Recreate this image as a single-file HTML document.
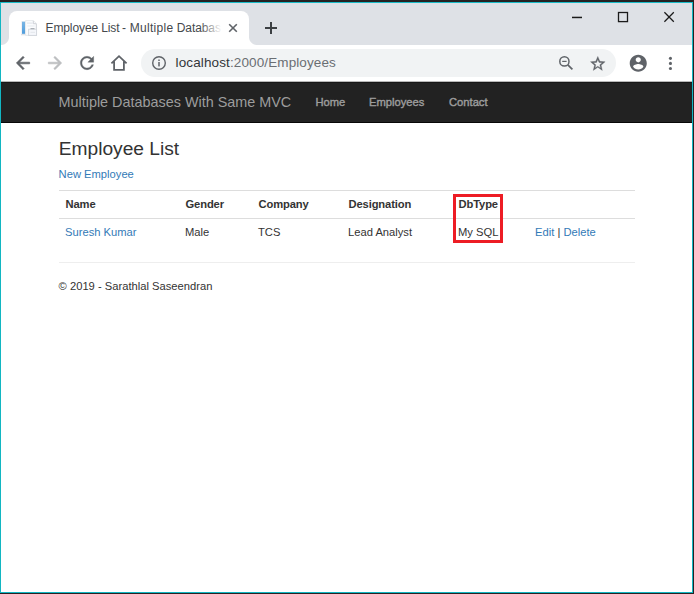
<!DOCTYPE html>
<html lang="en">
<head>
<meta charset="utf-8">
<title>Employee List - Multiple Databases With Same MVC</title>
<style>
*{box-sizing:border-box;margin:0;padding:0}
html,body{width:694px;height:594px;overflow:hidden;background:#fff}
body{position:relative;font-family:"Liberation Sans",sans-serif;color:#333}
.abs{position:absolute}
#frame-top{left:0;top:0;width:694px;height:2px;background:#252223}
#frame-teal-top{left:0;top:2px;width:693px;height:1px;background:#1bbcc8}
#frame-left{left:0;top:2px;width:1px;height:591px;background:#12b6c2}
#frame-right{left:692px;top:2px;width:1px;height:591px;background:#12b6c2}
#frame-right-dark{left:693px;top:0;width:1px;height:594px;background:#252223}
#frame-bottom{left:0;top:592px;width:693px;height:1px;background:#12b6c2}
#frame-bottom-dark{left:0;top:593px;width:694px;height:1px;background:#252223}
#tabstrip{left:1px;top:3px;width:691px;height:42px;background:#dee1e6}
#tab{left:9px;top:11px;width:240px;height:34px;background:#fff;border-radius:8px 8px 0 0}
#tab:before,#tab:after{content:"";position:absolute;bottom:0;width:8px;height:8px;background:radial-gradient(circle at 0 0,#dee1e6 7.5px,#fff 8.5px)}
#tab:before{left:-8px}
#tab:after{right:-8px;background:radial-gradient(circle at 100% 0,#dee1e6 7.5px,#fff 8.5px)}
#tabtitle{left:45px;top:20px;width:176px;height:18px;font-size:12px;line-height:16px;color:#44484c;white-space:nowrap;overflow:hidden;letter-spacing:-0.1px}
.w{position:absolute;top:0}
#tabfade{left:200px;top:18px;width:22px;height:20px;background:linear-gradient(to right,rgba(255,255,255,0),#fff)}
#toolbar{left:1px;top:45px;width:691px;height:37px;background:#fff;border-bottom:1px solid #b9b9b9}
#omnibox{left:141px;top:49px;width:475px;height:28px;border-radius:14px;background:#f1f3f4}
#url{left:175.6px;top:53.8px;font-size:13.5px;line-height:18px;color:#33363a;white-space:nowrap;letter-spacing:0.12px}
#url span{color:#6a6e73;letter-spacing:0.11px}
#navbar{left:1px;top:82px;width:691px;height:40.5px;background:#222;border-top:1px solid #171717;border-bottom:1px solid #080808}
.nav{color:#9d9d9d;white-space:nowrap}
#brand{left:58.5px;top:94px;font-size:14.4px;line-height:16px}
.navlink{top:96px;font-size:11.2px;line-height:13px;-webkit-text-stroke:0.4px #9d9d9d}
h2{position:absolute;left:58.7px;top:138px;font-size:19.2px;line-height:21px;font-weight:500;color:#333;white-space:nowrap}
a{color:#337ab7;text-decoration:none}
.t{position:absolute;font-size:11.2px;line-height:16px;white-space:nowrap;color:#333}
.b{font-weight:bold;letter-spacing:-0.12px;margin-left:0.5px}
.hl{position:absolute;left:59px;width:576px;height:1px;background:#ddd}
#redbox{left:453px;top:194px;width:50px;height:49px;border:3px solid #ed1c24}
svg{position:absolute;overflow:visible}
</style>
</head>
<body>
<div class="abs" id="tabstrip"></div>
<div class="abs" id="tab"></div>
<div class="abs" id="tabtitle"><span class="w" style="left:0.5px">Employee</span><span class="w" style="left:56.2px">List</span><span class="w" style="left:77px">-</span><span class="w" style="left:84.7px;letter-spacing:0.3px">Multiple</span><span class="w" style="left:131.8px;letter-spacing:-0.1px">Databases</span></div>
<div class="abs" id="tabfade"></div>
<div class="abs" id="toolbar"></div>
<div class="abs" id="omnibox"></div>
<div class="abs" id="url">localhost<span>:2000/Employees</span></div>


<!-- favicon -->
<svg style="left:21px;top:20px" width="16" height="16" viewBox="0 0 16 16">
<defs><linearGradient id="fb" x1="0" y1="0" x2="0" y2="1"><stop offset="0" stop-color="#7ab6e5"/><stop offset="1" stop-color="#4f9cdb"/></linearGradient></defs>
<rect x="0.2" y="1" width="4.6" height="13.6" fill="#eef1f5"/>
<rect x="0" y="14" width="15.5" height="1.3" fill="#dfe2e6"/>
<rect x="1" y="1.7" width="3" height="12.1" fill="url(#fb)"/>
<path d="M4.6 0.6H12.4L15.4 3.6V15.4H4.600Z" fill="#fbfcfe" stroke="#e3e6ea" stroke-width="0.9"/>
<path d="M12.3 0.8V3.700H15.3" fill="none" stroke="#c9cdd3" stroke-width="0.9"/>
<path d="M15.4 4V15.4H7.5" fill="none" stroke="#cfd3d8" stroke-width="0.9"/>
<rect x="6" y="2.500" width="5.6" height="1.2" fill="#e1e5ea"/>
<rect x="6.3" y="5.2" width="7.4" height="1.6" fill="#edf0f4"/>
<rect x="7.600" y="9.200" width="8" height="6.200" fill="#f5f7fb" stroke="#d2d6dc" stroke-width="0.9"/>
<rect x="9.500" y="8.100" width="4" height="1.100" fill="#a4a9b0"/>
<rect x="9.500" y="11.800" width="4.500" height="1.200" fill="#e6e9ee"/>
</svg>
<!-- tab close -->
<svg style="left:229px;top:24px" width="8" height="8" viewBox="0 0 8 8"><path d="M0.2 0.2L7.8 7.8M7.8 0.2L0.2 7.8" stroke="#5f6368" stroke-width="1.6" fill="none"/></svg>
<!-- new tab plus -->
<svg style="left:265px;top:22px" width="12" height="12" viewBox="0 0 12 12"><path d="M6 0V12M0 6H12" stroke="#3c4043" stroke-width="2" fill="none"/></svg>
<!-- window controls -->
<svg style="left:572px;top:12px" width="10" height="10" viewBox="0 0 10 10"><path d="M0 5.45H10" stroke="#1b1b1b" stroke-width="1.5" fill="none"/></svg>
<svg style="left:618px;top:12px" width="10" height="10" viewBox="0 0 10 10"><rect x="0.5" y="0.5" width="9" height="9.1" stroke="#1b1b1b" stroke-width="1.3" fill="none"/></svg>
<svg style="left:664px;top:12px" width="10" height="10" viewBox="0 0 10 10"><path d="M0.4 0.300L9.8 9.700M9.800 0.300L0.400 9.700" stroke="#1b1b1b" stroke-width="1.25" fill="none"/></svg>
<!-- back -->
<svg style="left:13px;top:53px" width="20" height="20" viewBox="0 0 24 24"><path fill="#5f6368" stroke="#5f6368" stroke-width="0.7" d="M20 11H7.83l5.59-5.59L12 4l-8 8 8 8 1.41-1.41L7.83 13H20v-2z"/></svg>
<!-- forward -->
<svg style="left:45px;top:53px" width="20" height="20" viewBox="0 0 24 24"><path fill="#bcbec0" stroke="#bcbec0" stroke-width="0.7" d="M12 4l-1.41 1.41L16.17 11H4v2h12.17l-5.58 5.59L12 20l8-8z"/></svg>
<!-- reload -->
<svg style="left:77px;top:52.9px" width="20" height="20" viewBox="0 0 24 24"><path fill="#5f6368" stroke="#5f6368" stroke-width="0.4" d="M17.65 6.35C16.2 4.9 14.21 4 12 4c-4.42 0-7.99 3.58-7.99 8s3.57 8 7.99 8c3.73 0 6.84-2.55 7.73-6h-2.08c-.82 2.33-3.04 4-5.65 4-3.31 0-6-2.69-6-6s2.69-6 6-6c1.66 0 3.14.69 4.22 1.78L13 11h7V4l-2.35 2.350z"/></svg>
<!-- home -->
<svg style="left:109px;top:53px" width="20" height="20" viewBox="0 0 20 20"><path d="M2.4 10.3L10 3.2L17.6 10.3M5.1 8.6V16.9H14.9V8.6" stroke="#5f6368" stroke-width="1.8" fill="none"/></svg>
<!-- info -->
<svg style="left:151px;top:55px" width="16" height="16" viewBox="0 0 16 16"><circle cx="8" cy="8" r="6.3" stroke="#5f6368" stroke-width="1.4" fill="none"/><rect x="7.25" y="7" width="1.5" height="4.4" fill="#5f6368"/><rect x="7.25" y="4.5" width="1.5" height="1.5" fill="#5f6368"/></svg>
<!-- zoom out -->
<svg style="left:557px;top:54px" width="18" height="18" viewBox="0 0 18 18"><circle cx="7.4" cy="7.4" r="4.6" stroke="#5f6368" stroke-width="1.5" fill="none"/><path d="M10.8 10.8L15.4 15.4" stroke="#5f6368" stroke-width="1.7" fill="none"/><path d="M5.2 7.4H9.6" stroke="#5f6368" stroke-width="1.2" fill="none"/></svg>
<!-- star -->
<svg style="left:589.25px;top:54.6px" width="17.6" height="17.6" viewBox="0 0 24 24"><path fill="#5f6368" stroke="#5f6368" stroke-width="0.45" d="M22 9.24l-7.19-.62L12 2 9.19 8.63 2 9.24l5.46 4.73L5.820 21 12 16.77 18.18 21l-1.63-7.03L22 9.24zM12 15.4l-3.76 2.27 1-4.28-3.32-2.88 4.38-.38L12 6.1l1.71 4.04 4.38.38-3.32 2.88 1 4.28L12 15.4z"/></svg>
<!-- profile -->
<svg style="left:627.85px;top:52.5px" width="20.5" height="20.5" viewBox="0 0 24 24"><path fill="#5f6368" d="M12 2C6.48 2 2 6.48 2 12s4.48 10 10 10 10-4.48 10-10S17.52 2 12 2zm0 3c1.66 0 3 1.34 3 3s-1.34 3-3 3-3-1.34-3-3 1.340-3 3-3zm0 14.2c-2.5 0-4.71-1.28-6-3.220.03-1.990 4-3.080 6-3.080 1.990 0 5.970 1.090 6 3.080-1.290 1.940-3.500 3.220-6 3.220z"/></svg>
<!-- menu -->
<svg style="left:660px;top:53px" width="20" height="20" viewBox="0 0 20 20"><circle cx="10.45" cy="5.35" r="1.55" fill="#5f6368"/><circle cx="10.45" cy="10.400" r="1.55" fill="#5f6368"/><circle cx="10.45" cy="15.45" r="1.55" fill="#5f6368"/></svg>

<div class="abs" id="navbar"></div>
<div class="abs nav" id="brand">Multiple Databases With Same MVC</div>
<div class="abs nav navlink" style="left:315.5px">Home</div>
<div class="abs nav navlink" style="left:369px">Employees</div>
<div class="abs nav navlink" style="left:449px">Contact</div>

<h2>Employee List</h2>
<div class="t" style="left:58.6px;top:166px"><a>New Employee</a></div>

<div class="hl" style="top:190px"></div>
<div class="t b" style="left:65px;top:196px">Name</div>
<div class="t b" style="left:185px;top:196px">Gender</div>
<div class="t b" style="left:258px;top:196px">Company</div>
<div class="t b" style="left:348px;top:196px">Designation</div>
<div class="t b" style="left:458px;top:196px">DbType</div>
<div class="hl" style="top:218px"></div>
<div class="t" style="left:65px;top:224px"><a>Suresh Kumar</a></div>
<div class="t" style="left:185px;top:224px">Male</div>
<div class="t" style="left:258px;top:224px">TCS</div>
<div class="t" style="left:348px;top:224px">Lead Analyst</div>
<div class="t" style="left:458px;top:224px">My SQL</div>
<div class="t" style="left:535px;top:224px"><a>Edit</a> | <a>Delete</a></div>
<div class="abs" id="redbox"></div>
<div class="hl" style="top:262px;background:#eee"></div>
<div class="t" style="left:58.6px;top:278px">© 2019 - Sarathlal Saseendran</div>

<div class="abs" id="frame-top"></div>
<div class="abs" id="frame-teal-top"></div>
<div class="abs" id="frame-left"></div>
<div class="abs" id="frame-right"></div>
<div class="abs" id="frame-right-dark"></div>
<div class="abs" id="frame-bottom"></div>
<div class="abs" id="frame-bottom-dark"></div>
</body>
</html>
